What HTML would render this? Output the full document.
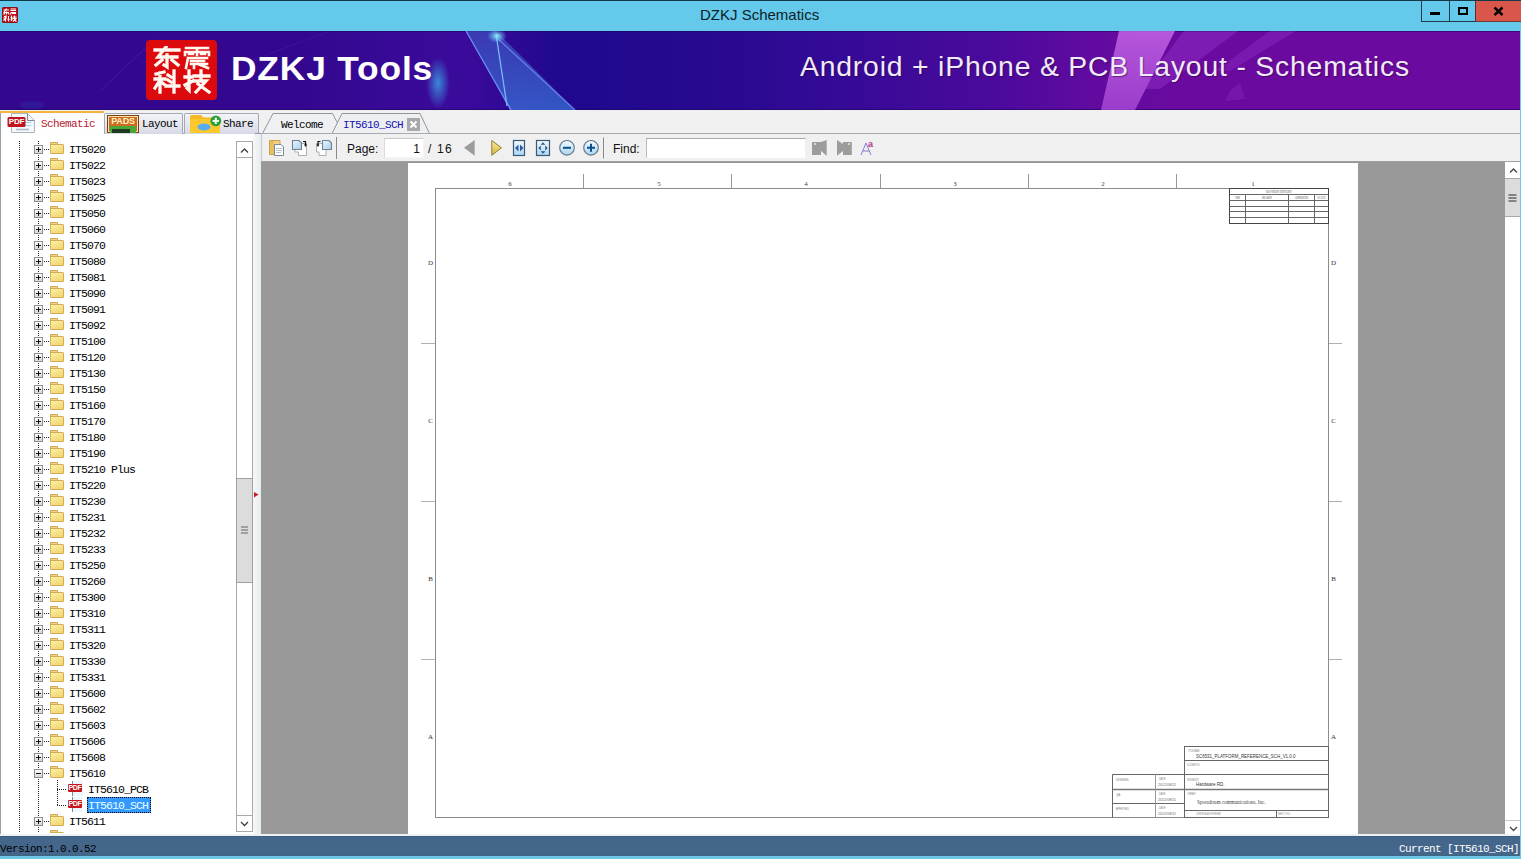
<!DOCTYPE html>
<html><head><meta charset="utf-8">
<style>
*{margin:0;padding:0;box-sizing:border-box}
html,body{width:1521px;height:859px;overflow:hidden;background:#f0f0f0;font-family:"Liberation Sans",sans-serif}
.a{position:absolute}
.mono{font-family:"Liberation Mono",monospace;font-size:12px;letter-spacing:-1.2px;white-space:pre}

.pb{width:9px;height:9px;border:1px solid #8f8f8f;background:linear-gradient(#fdfdfd,#d6d6d6)}
.pb:before{content:"";position:absolute;left:1px;top:3px;width:5px;height:1px;background:#111}
.pb i{position:absolute;left:3px;top:1px;width:1px;height:5px;background:#111}
.fd{width:14px;height:12px}
.fd:before{content:"";position:absolute;left:0;top:0;width:6px;height:3px;background:#efd57a;border:1px solid #d3ad55;border-bottom:none;border-radius:1px 1px 0 0}
.fd:after{content:"";position:absolute;left:0;top:2px;width:14px;height:10px;box-sizing:border-box;background:linear-gradient(160deg,#fbf0a8,#f3d56a);border:1px solid #d3ad55;border-radius:1px}
.tt{line-height:16px;height:16px;color:#000;font-size:11.5px;letter-spacing:-0.9px}
.sel{background:#3399ff;color:#eaffff;outline:1px dotted #000;outline-offset:-1px;height:16px;line-height:15px}
.tab2{height:21px;background:linear-gradient(#f3f4f8,#d6d9e6);border:1px solid #a4a9b5;border-bottom:none;border-radius:2px 2px 0 0}
.pi{width:16px;height:16px}
.pi:before{content:"";position:absolute;left:4px;top:0;width:10px;height:15px;background:#eef6fb;border-left:1px solid #7a8a99}
.pi b{position:absolute;left:0;top:3px;width:14px;height:8px;background:#c8141e;color:#fff;font:bold 7px/8px "Liberation Sans",sans-serif;text-align:center;border-radius:1px;letter-spacing:-0.3px}
</style></head><body>
<!-- TITLE BAR -->
<div class="a" style="left:0;top:0;width:1521px;height:31px;background:#64c9ea"></div>
<div class="a" style="left:0;top:0;width:1521px;height:1px;background:#12384a"></div>
<div class="a" id="title" style="left:700px;top:6px;font-size:15px;color:#0e1e28;white-space:pre;line-height:18px">DZKJ Schematics</div>
<!-- BANNER -->
<div class="a" id="banner" style="left:0;top:31px;width:1520px;height:79px;background:linear-gradient(90deg,#33088f 0%,#33088f 20%,#3a0a9a 29%,#3a0a9a 31%,#1f088e 37%,#26098e 46%,#340a96 55%,#4c0a9c 66%,#620aa0 72%,#6a0a9e 78%,#6a0a9e 100%)"></div>
<svg class="a" style="left:0;top:31px" width="1520" height="79">
 <path d="M0 0.5H1520M0 78.5H1520" stroke="#1c0660" stroke-width="1" opacity="0.6"/>
 <defs>
  <radialGradient id="glow1" cx="0.5" cy="0.5" r="0.5"><stop offset="0" stop-color="#3aa8e8" stop-opacity="0.8"/><stop offset="1" stop-color="#3aa8e8" stop-opacity="0"/></radialGradient>
  <radialGradient id="glow2" cx="0.5" cy="0.5" r="0.5"><stop offset="0" stop-color="#9ff" stop-opacity="0.9"/><stop offset="1" stop-color="#6cf" stop-opacity="0"/></radialGradient>
  <linearGradient id="strk" x1="0" y1="0" x2="0" y2="1"><stop offset="0" stop-color="#3d62c8" stop-opacity="0.55"/><stop offset="1" stop-color="#3a70d8" stop-opacity="0.75"/></linearGradient>
 </defs>
 <!-- faint diagonal streaks left -->
 <path d="M100 60L155 8" stroke="#6a50d0" stroke-width="1" opacity="0.25"/><ellipse cx="32" cy="74" rx="12" ry="4" fill="#3050c0" opacity="0.2"/>
 <path d="M250 30L330 0" stroke="#6a50d0" stroke-width="1" opacity="0.15"/>
 <!-- blue glow left of streak -->
 <ellipse cx="438" cy="52" rx="12" ry="26" fill="url(#glow1)"/>
 <!-- blue streak -->
 <polygon points="466,0 496,0 575,79 510,79" fill="url(#strk)"/>
 <line x1="466" y1="0" x2="511" y2="79" stroke="#6a8ff0" stroke-width="1.3"/>
 <line x1="496" y1="3" x2="507" y2="75" stroke="#7ab8f8" stroke-width="1.3"/>
 <line x1="496" y1="6" x2="575" y2="79" stroke="#6a7ee8" stroke-width="1.2"/>
 <ellipse cx="497" cy="5" rx="10" ry="7" fill="url(#glow2)"/>
 <!-- pink streaks right -->
 <defs><linearGradient id="pk" x1="0" y1="0" x2="0" y2="1"><stop offset="0" stop-color="#d070f0" stop-opacity="0.75"/><stop offset="1" stop-color="#c060e8" stop-opacity="0.6"/></linearGradient></defs><polygon points="1119,0 1175,0 1135,79 1101,79" fill="url(#pk)"/>
 <polygon points="1184,0 1238,0 1160,58 1140,58" fill="#a040d8" opacity="0.35"/>
 <polygon points="1270,0 1296,0 1230,40 1215,40" fill="#9a40d8" opacity="0.3"/>
 <polygon points="1230,60 1240,52 1245,68 1225,70" fill="#9a40d8" opacity="0.25"/>
</svg>
<!-- logo -->
<div class="a" style="left:146px;top:40px;width:71px;height:60px;background:#dc0a0c;border-radius:4px"></div>
<svg class="a" style="left:153px;top:46px" width="60" height="48" fill="none" stroke="#fff8f0" stroke-width="3.3" stroke-linecap="square">
 <g transform="translate(1,1)">
  <path d="M1 3H25M12 0L4 10H23M13 8V20L10 18M8 13L2 18M18 13L24 18"/>
 </g>
 <g transform="translate(31,1)" stroke-width="2.6">
  <path d="M2 1H24M1 5H25V8M1 5V8M13 1V8M5 7H9M17 7H21M4 11H23M4 11L2 21M7 14H20M7 17H23M10 17V21M14 17L24 21"/>
 </g>
 <g transform="translate(1,25)">
  <path d="M2 3L10 1M1 8H11M6 2V21M6 9L1 17M6 10L11 14M14 4L17 6M14 9L17 11M12 15H25M20 0V21"/>
 </g>
 <g transform="translate(31,25)">
  <path d="M1 6H8M5 0V19L3 17M1 14L9 10M10 5H25M17 0V9M11 10H22L12 21M14 13L25 21"/>
 </g>
</svg>
<div class="a" id="dzkj" style="left:231px;top:49px;font-size:33px;font-weight:700;color:#fff;white-space:pre;line-height:40px;letter-spacing:0.8px;transform:scaleX(1.07);transform-origin:0 0">DZKJ Tools</div>
<div class="a" id="android" style="left:800px;top:50px;font-size:27px;color:#f0eaf8;white-space:pre;line-height:34px;letter-spacing:0.77px;transform:scaleX(1.05);transform-origin:0 0;text-shadow:1px 1px 1px rgba(40,0,60,0.5)">Android + iPhone &amp; PCB Layout - Schematics</div>
<!-- right window border -->
<div class="a" style="left:1520px;top:31px;width:1px;height:828px;background:#64c9ea"></div>
<!-- TAB ROW -->
<div class="a" style="left:0;top:110px;width:1520px;height:24px;background:#f0f0f0"></div>

<!-- LEFT TABS -->
<div class="a" style="left:0;top:111px;width:104px;height:23px;background:linear-gradient(#fbfbfb,#fff);border-left:1px solid #9aa0a6"></div>
<div class="a" style="left:0;top:111px;width:104px;height:2px;background:#f4b23e"></div>
<div class="a" style="left:104px;top:133px;width:158px;height:1px;background:#a2aab0"></div>
<svg class="a" style="left:7px;top:112px" width="34" height="22">
 <path d="M4.5 1.5H20.5L27.5 8.5V20.5H4.5Z" fill="#f4f8fb" stroke="#aab6c0" stroke-width="1"/>
 <path d="M20.5 1.5V8.5H27.5" fill="none" stroke="#7d8a95" stroke-width="1"/>
 <path d="M9 17.5H22" stroke="#a8b8c8" stroke-width="1.5"/>
 <path d="M16 10.5H24M16 13.5H24" stroke="#9cd0ee" stroke-width="1.2"/>
 <rect x="0.5" y="5" width="18" height="10" rx="1.5" fill="#c0141e"/>
</svg>
<div class="a" style="left:8px;top:117px;width:17px;height:9px;font:bold 8px/9px 'Liberation Sans',sans-serif;color:#fff;text-align:center;letter-spacing:-0.2px">PDF</div>
<div class="a mono" style="left:41px;top:117px;line-height:14px;font-size:11px;letter-spacing:-0.6px;color:#b82030">Schematic</div>
<div class="a tab2" style="left:104px;top:113px;width:79px"></div>
<div class="a" style="left:107px;top:115px;width:32px;height:18px;background:#cf6a22;border:1px solid #7a4010;box-shadow:inset 0 0 0 1px #f6e6b0"></div>
<div class="a" style="left:109px;top:116px;width:28px;height:10px;font:bold 9px/10px 'Liberation Sans',sans-serif;color:#fff2c0;letter-spacing:-0.2px;text-align:center">PADS</div>
<div class="a" style="left:110px;top:126px;width:26px;height:7px;background:#4aa83a"></div>
<div class="a" style="left:112px;top:129px;width:18px;height:4px;background:#1e3a20"></div>
<div class="a mono" style="left:142px;top:117px;line-height:14px;font-size:11px;letter-spacing:-0.6px;color:#000">Layout</div>
<div class="a tab2" style="left:184px;top:113px;width:75px"></div>
<svg class="a" style="left:189px;top:113px" width="34" height="20">
 <path d="M1 3.5Q1 2 3 2H12L14.5 4.5H31V20H1Z" fill="#f5b820"/>
 <path d="M1 6H31V20H1Z" fill="#fcc830"/>
 <ellipse cx="15" cy="14" rx="6.5" ry="3.6" fill="#5aacf0"/>
 <circle cx="26.8" cy="7.9" r="5.4" fill="#2ea03a"/>
 <path d="M26.8 4.8V11M23.7 7.9H29.9" stroke="#f0fff0" stroke-width="2"/>
</svg>
<div class="a mono" style="left:223px;top:117px;line-height:14px;font-size:11px;letter-spacing:-0.6px;color:#000">Share</div>
<!-- DOC TABS -->
<svg class="a" style="left:255px;top:110px" width="200" height="25">
 <polygon points="7.5,23.5 18,3.5 77.5,3.5 88,23.5" fill="#eef0f3" stroke="#8f979d" stroke-width="1"/>
 <path d="M0 23.5H7.5" stroke="#8f979d"/>
 <polygon points="77,24 87,3.5 165,3.5 174.5,23.5 200,23.5 200,25 77,25" fill="#eeeff2"/>
 <path d="M77 23.5L87 3.5H165L174.5 23.5H200" fill="none" stroke="#8f979d" stroke-width="1"/>
</svg>
<div class="a mono" style="left:281px;top:118px;line-height:14px;font-size:11px;letter-spacing:-0.6px;color:#000">Welcome</div>
<div class="a mono" style="left:343px;top:118px;line-height:14px;font-size:11px;letter-spacing:-0.6px;color:#1010b0">IT5610_SCH</div>
<div class="a" style="left:407px;top:118px;width:13px;height:13px;background:#a8a8a8"></div>
<svg class="a" style="left:407px;top:118px" width="13" height="13"><path d="M3.5 3.5L9.5 9.5M9.5 3.5L3.5 9.5" stroke="#fff" stroke-width="2"/></svg>
<!-- LEFT PANEL -->
<div class="a" style="left:0;top:134px;width:253px;height:700px;background:#fff;border-left:1px solid #9aa0a6"></div>
<div class="a" id="tree" style="left:1px;top:133px;width:235px;height:700px;overflow:hidden">
<div class="a" style="left:18px;top:8px;width:1px;height:700px;background:repeating-linear-gradient(#222 0 1px,transparent 1px 2px)"></div>
<div class="a" style="left:37px;top:8px;width:1px;height:700px;background:repeating-linear-gradient(#222 0 1px,transparent 1px 2px)"></div>
<div class="a pb" style="left:33px;top:12px"><i></i></div>
<div class="a" style="left:43px;top:16px;width:6px;height:1px;background:repeating-linear-gradient(90deg,#222 0 1px,transparent 1px 2px)"></div>
<div class="a fd" style="left:49px;top:9px"></div>
<div class="a mono tt" style="left:68px;top:9px">IT5020</div>
<div class="a pb" style="left:33px;top:28px"><i></i></div>
<div class="a" style="left:43px;top:32px;width:6px;height:1px;background:repeating-linear-gradient(90deg,#222 0 1px,transparent 1px 2px)"></div>
<div class="a fd" style="left:49px;top:25px"></div>
<div class="a mono tt" style="left:68px;top:25px">IT5022</div>
<div class="a pb" style="left:33px;top:44px"><i></i></div>
<div class="a" style="left:43px;top:48px;width:6px;height:1px;background:repeating-linear-gradient(90deg,#222 0 1px,transparent 1px 2px)"></div>
<div class="a fd" style="left:49px;top:41px"></div>
<div class="a mono tt" style="left:68px;top:41px">IT5023</div>
<div class="a pb" style="left:33px;top:60px"><i></i></div>
<div class="a" style="left:43px;top:64px;width:6px;height:1px;background:repeating-linear-gradient(90deg,#222 0 1px,transparent 1px 2px)"></div>
<div class="a fd" style="left:49px;top:57px"></div>
<div class="a mono tt" style="left:68px;top:57px">IT5025</div>
<div class="a pb" style="left:33px;top:76px"><i></i></div>
<div class="a" style="left:43px;top:80px;width:6px;height:1px;background:repeating-linear-gradient(90deg,#222 0 1px,transparent 1px 2px)"></div>
<div class="a fd" style="left:49px;top:73px"></div>
<div class="a mono tt" style="left:68px;top:73px">IT5050</div>
<div class="a pb" style="left:33px;top:92px"><i></i></div>
<div class="a" style="left:43px;top:96px;width:6px;height:1px;background:repeating-linear-gradient(90deg,#222 0 1px,transparent 1px 2px)"></div>
<div class="a fd" style="left:49px;top:89px"></div>
<div class="a mono tt" style="left:68px;top:89px">IT5060</div>
<div class="a pb" style="left:33px;top:108px"><i></i></div>
<div class="a" style="left:43px;top:112px;width:6px;height:1px;background:repeating-linear-gradient(90deg,#222 0 1px,transparent 1px 2px)"></div>
<div class="a fd" style="left:49px;top:105px"></div>
<div class="a mono tt" style="left:68px;top:105px">IT5070</div>
<div class="a pb" style="left:33px;top:124px"><i></i></div>
<div class="a" style="left:43px;top:128px;width:6px;height:1px;background:repeating-linear-gradient(90deg,#222 0 1px,transparent 1px 2px)"></div>
<div class="a fd" style="left:49px;top:121px"></div>
<div class="a mono tt" style="left:68px;top:121px">IT5080</div>
<div class="a pb" style="left:33px;top:140px"><i></i></div>
<div class="a" style="left:43px;top:144px;width:6px;height:1px;background:repeating-linear-gradient(90deg,#222 0 1px,transparent 1px 2px)"></div>
<div class="a fd" style="left:49px;top:137px"></div>
<div class="a mono tt" style="left:68px;top:137px">IT5081</div>
<div class="a pb" style="left:33px;top:156px"><i></i></div>
<div class="a" style="left:43px;top:160px;width:6px;height:1px;background:repeating-linear-gradient(90deg,#222 0 1px,transparent 1px 2px)"></div>
<div class="a fd" style="left:49px;top:153px"></div>
<div class="a mono tt" style="left:68px;top:153px">IT5090</div>
<div class="a pb" style="left:33px;top:172px"><i></i></div>
<div class="a" style="left:43px;top:176px;width:6px;height:1px;background:repeating-linear-gradient(90deg,#222 0 1px,transparent 1px 2px)"></div>
<div class="a fd" style="left:49px;top:169px"></div>
<div class="a mono tt" style="left:68px;top:169px">IT5091</div>
<div class="a pb" style="left:33px;top:188px"><i></i></div>
<div class="a" style="left:43px;top:192px;width:6px;height:1px;background:repeating-linear-gradient(90deg,#222 0 1px,transparent 1px 2px)"></div>
<div class="a fd" style="left:49px;top:185px"></div>
<div class="a mono tt" style="left:68px;top:185px">IT5092</div>
<div class="a pb" style="left:33px;top:204px"><i></i></div>
<div class="a" style="left:43px;top:208px;width:6px;height:1px;background:repeating-linear-gradient(90deg,#222 0 1px,transparent 1px 2px)"></div>
<div class="a fd" style="left:49px;top:201px"></div>
<div class="a mono tt" style="left:68px;top:201px">IT5100</div>
<div class="a pb" style="left:33px;top:220px"><i></i></div>
<div class="a" style="left:43px;top:224px;width:6px;height:1px;background:repeating-linear-gradient(90deg,#222 0 1px,transparent 1px 2px)"></div>
<div class="a fd" style="left:49px;top:217px"></div>
<div class="a mono tt" style="left:68px;top:217px">IT5120</div>
<div class="a pb" style="left:33px;top:236px"><i></i></div>
<div class="a" style="left:43px;top:240px;width:6px;height:1px;background:repeating-linear-gradient(90deg,#222 0 1px,transparent 1px 2px)"></div>
<div class="a fd" style="left:49px;top:233px"></div>
<div class="a mono tt" style="left:68px;top:233px">IT5130</div>
<div class="a pb" style="left:33px;top:252px"><i></i></div>
<div class="a" style="left:43px;top:256px;width:6px;height:1px;background:repeating-linear-gradient(90deg,#222 0 1px,transparent 1px 2px)"></div>
<div class="a fd" style="left:49px;top:249px"></div>
<div class="a mono tt" style="left:68px;top:249px">IT5150</div>
<div class="a pb" style="left:33px;top:268px"><i></i></div>
<div class="a" style="left:43px;top:272px;width:6px;height:1px;background:repeating-linear-gradient(90deg,#222 0 1px,transparent 1px 2px)"></div>
<div class="a fd" style="left:49px;top:265px"></div>
<div class="a mono tt" style="left:68px;top:265px">IT5160</div>
<div class="a pb" style="left:33px;top:284px"><i></i></div>
<div class="a" style="left:43px;top:288px;width:6px;height:1px;background:repeating-linear-gradient(90deg,#222 0 1px,transparent 1px 2px)"></div>
<div class="a fd" style="left:49px;top:281px"></div>
<div class="a mono tt" style="left:68px;top:281px">IT5170</div>
<div class="a pb" style="left:33px;top:300px"><i></i></div>
<div class="a" style="left:43px;top:304px;width:6px;height:1px;background:repeating-linear-gradient(90deg,#222 0 1px,transparent 1px 2px)"></div>
<div class="a fd" style="left:49px;top:297px"></div>
<div class="a mono tt" style="left:68px;top:297px">IT5180</div>
<div class="a pb" style="left:33px;top:316px"><i></i></div>
<div class="a" style="left:43px;top:320px;width:6px;height:1px;background:repeating-linear-gradient(90deg,#222 0 1px,transparent 1px 2px)"></div>
<div class="a fd" style="left:49px;top:313px"></div>
<div class="a mono tt" style="left:68px;top:313px">IT5190</div>
<div class="a pb" style="left:33px;top:332px"><i></i></div>
<div class="a" style="left:43px;top:336px;width:6px;height:1px;background:repeating-linear-gradient(90deg,#222 0 1px,transparent 1px 2px)"></div>
<div class="a fd" style="left:49px;top:329px"></div>
<div class="a mono tt" style="left:68px;top:329px">IT5210 Plus</div>
<div class="a pb" style="left:33px;top:348px"><i></i></div>
<div class="a" style="left:43px;top:352px;width:6px;height:1px;background:repeating-linear-gradient(90deg,#222 0 1px,transparent 1px 2px)"></div>
<div class="a fd" style="left:49px;top:345px"></div>
<div class="a mono tt" style="left:68px;top:345px">IT5220</div>
<div class="a pb" style="left:33px;top:364px"><i></i></div>
<div class="a" style="left:43px;top:368px;width:6px;height:1px;background:repeating-linear-gradient(90deg,#222 0 1px,transparent 1px 2px)"></div>
<div class="a fd" style="left:49px;top:361px"></div>
<div class="a mono tt" style="left:68px;top:361px">IT5230</div>
<div class="a pb" style="left:33px;top:380px"><i></i></div>
<div class="a" style="left:43px;top:384px;width:6px;height:1px;background:repeating-linear-gradient(90deg,#222 0 1px,transparent 1px 2px)"></div>
<div class="a fd" style="left:49px;top:377px"></div>
<div class="a mono tt" style="left:68px;top:377px">IT5231</div>
<div class="a pb" style="left:33px;top:396px"><i></i></div>
<div class="a" style="left:43px;top:400px;width:6px;height:1px;background:repeating-linear-gradient(90deg,#222 0 1px,transparent 1px 2px)"></div>
<div class="a fd" style="left:49px;top:393px"></div>
<div class="a mono tt" style="left:68px;top:393px">IT5232</div>
<div class="a pb" style="left:33px;top:412px"><i></i></div>
<div class="a" style="left:43px;top:416px;width:6px;height:1px;background:repeating-linear-gradient(90deg,#222 0 1px,transparent 1px 2px)"></div>
<div class="a fd" style="left:49px;top:409px"></div>
<div class="a mono tt" style="left:68px;top:409px">IT5233</div>
<div class="a pb" style="left:33px;top:428px"><i></i></div>
<div class="a" style="left:43px;top:432px;width:6px;height:1px;background:repeating-linear-gradient(90deg,#222 0 1px,transparent 1px 2px)"></div>
<div class="a fd" style="left:49px;top:425px"></div>
<div class="a mono tt" style="left:68px;top:425px">IT5250</div>
<div class="a pb" style="left:33px;top:444px"><i></i></div>
<div class="a" style="left:43px;top:448px;width:6px;height:1px;background:repeating-linear-gradient(90deg,#222 0 1px,transparent 1px 2px)"></div>
<div class="a fd" style="left:49px;top:441px"></div>
<div class="a mono tt" style="left:68px;top:441px">IT5260</div>
<div class="a pb" style="left:33px;top:460px"><i></i></div>
<div class="a" style="left:43px;top:464px;width:6px;height:1px;background:repeating-linear-gradient(90deg,#222 0 1px,transparent 1px 2px)"></div>
<div class="a fd" style="left:49px;top:457px"></div>
<div class="a mono tt" style="left:68px;top:457px">IT5300</div>
<div class="a pb" style="left:33px;top:476px"><i></i></div>
<div class="a" style="left:43px;top:480px;width:6px;height:1px;background:repeating-linear-gradient(90deg,#222 0 1px,transparent 1px 2px)"></div>
<div class="a fd" style="left:49px;top:473px"></div>
<div class="a mono tt" style="left:68px;top:473px">IT5310</div>
<div class="a pb" style="left:33px;top:492px"><i></i></div>
<div class="a" style="left:43px;top:496px;width:6px;height:1px;background:repeating-linear-gradient(90deg,#222 0 1px,transparent 1px 2px)"></div>
<div class="a fd" style="left:49px;top:489px"></div>
<div class="a mono tt" style="left:68px;top:489px">IT5311</div>
<div class="a pb" style="left:33px;top:508px"><i></i></div>
<div class="a" style="left:43px;top:512px;width:6px;height:1px;background:repeating-linear-gradient(90deg,#222 0 1px,transparent 1px 2px)"></div>
<div class="a fd" style="left:49px;top:505px"></div>
<div class="a mono tt" style="left:68px;top:505px">IT5320</div>
<div class="a pb" style="left:33px;top:524px"><i></i></div>
<div class="a" style="left:43px;top:528px;width:6px;height:1px;background:repeating-linear-gradient(90deg,#222 0 1px,transparent 1px 2px)"></div>
<div class="a fd" style="left:49px;top:521px"></div>
<div class="a mono tt" style="left:68px;top:521px">IT5330</div>
<div class="a pb" style="left:33px;top:540px"><i></i></div>
<div class="a" style="left:43px;top:544px;width:6px;height:1px;background:repeating-linear-gradient(90deg,#222 0 1px,transparent 1px 2px)"></div>
<div class="a fd" style="left:49px;top:537px"></div>
<div class="a mono tt" style="left:68px;top:537px">IT5331</div>
<div class="a pb" style="left:33px;top:556px"><i></i></div>
<div class="a" style="left:43px;top:560px;width:6px;height:1px;background:repeating-linear-gradient(90deg,#222 0 1px,transparent 1px 2px)"></div>
<div class="a fd" style="left:49px;top:553px"></div>
<div class="a mono tt" style="left:68px;top:553px">IT5600</div>
<div class="a pb" style="left:33px;top:572px"><i></i></div>
<div class="a" style="left:43px;top:576px;width:6px;height:1px;background:repeating-linear-gradient(90deg,#222 0 1px,transparent 1px 2px)"></div>
<div class="a fd" style="left:49px;top:569px"></div>
<div class="a mono tt" style="left:68px;top:569px">IT5602</div>
<div class="a pb" style="left:33px;top:588px"><i></i></div>
<div class="a" style="left:43px;top:592px;width:6px;height:1px;background:repeating-linear-gradient(90deg,#222 0 1px,transparent 1px 2px)"></div>
<div class="a fd" style="left:49px;top:585px"></div>
<div class="a mono tt" style="left:68px;top:585px">IT5603</div>
<div class="a pb" style="left:33px;top:604px"><i></i></div>
<div class="a" style="left:43px;top:608px;width:6px;height:1px;background:repeating-linear-gradient(90deg,#222 0 1px,transparent 1px 2px)"></div>
<div class="a fd" style="left:49px;top:601px"></div>
<div class="a mono tt" style="left:68px;top:601px">IT5606</div>
<div class="a pb" style="left:33px;top:620px"><i></i></div>
<div class="a" style="left:43px;top:624px;width:6px;height:1px;background:repeating-linear-gradient(90deg,#222 0 1px,transparent 1px 2px)"></div>
<div class="a fd" style="left:49px;top:617px"></div>
<div class="a mono tt" style="left:68px;top:617px">IT5608</div>
<div class="a pb" style="left:33px;top:636px"></div>
<div class="a" style="left:43px;top:640px;width:6px;height:1px;background:repeating-linear-gradient(90deg,#222 0 1px,transparent 1px 2px)"></div>
<div class="a fd" style="left:49px;top:633px"></div>
<div class="a mono tt" style="left:68px;top:633px">IT5610</div>
<div class="a" style="left:56px;top:656px;width:10px;height:1px;background:repeating-linear-gradient(90deg,#222 0 1px,transparent 1px 2px)"></div>
<div class="a pi" style="left:67px;top:648px"><b>PDF</b></div>
<div class="a mono tt" style="left:87px;top:649px">IT5610_PCB</div>
<div class="a" style="left:56px;top:672px;width:10px;height:1px;background:repeating-linear-gradient(90deg,#222 0 1px,transparent 1px 2px)"></div>
<div class="a pi" style="left:67px;top:664px"><b>PDF</b></div>
<div class="a mono tt sel" style="left:86px;top:664px;padding:1px 3px 0 1px">IT5610_SCH</div>
<div class="a pb" style="left:33px;top:684px"><i></i></div>
<div class="a" style="left:43px;top:688px;width:6px;height:1px;background:repeating-linear-gradient(90deg,#222 0 1px,transparent 1px 2px)"></div>
<div class="a fd" style="left:49px;top:681px"></div>
<div class="a mono tt" style="left:68px;top:681px">IT5611</div>
<div class="a pb" style="left:33px;top:700px"><i></i></div>
<div class="a" style="left:43px;top:704px;width:6px;height:1px;background:repeating-linear-gradient(90deg,#222 0 1px,transparent 1px 2px)"></div>
<div class="a fd" style="left:49px;top:697px"></div>
<div class="a mono tt" style="left:68px;top:697px">IT5612</div>
<div class="a" style="left:56px;top:647px;width:1px;height:25px;background:repeating-linear-gradient(#222 0 1px,transparent 1px 2px)"></div>
</div>
<!-- splitter -->
<div class="a" style="left:253px;top:134px;width:8px;height:702px;background:linear-gradient(90deg,#f6f8f9,#e8ecef)"></div>

<!-- tree scrollbar -->
<div class="a" style="left:236px;top:141px;width:17px;height:691px;background:#fff;border:1px solid #a9a9a9"></div>
<div class="a" style="left:236px;top:157px;width:17px;height:1px;background:#a9a9a9"></div>
<div class="a" style="left:236px;top:815px;width:17px;height:1px;background:#a9a9a9"></div>
<div class="a" style="left:236px;top:478px;width:17px;height:105px;background:#dcdcdc;border:1px solid #a0a0a0"></div>
<svg class="a" style="left:236px;top:141px" width="17" height="691">
 <path d="M5 11.5L8.5 8L12 11.5" fill="none" stroke="#404040" stroke-width="1.3"/>
 <path d="M5 681L8.5 684.5L12 681" fill="none" stroke="#404040" stroke-width="1.3"/>
 <path d="M5 386H12M5 389H12M5 392H12" stroke="#666" stroke-width="1.2"/>
</svg>
<!-- splitter arrow -->
<svg class="a" style="left:253px;top:488px" width="8" height="12"><path d="M1 4L5.5 6.5L1 9.5Z" fill="#c81e2a"/></svg>
<!-- TOOLBAR -->
<div class="a" style="left:261px;top:133px;width:1259px;height:28px;background:#f0f0f0;border-top:1px solid #a8acb0;border-left:1px solid #c8ccd0"></div>
<div class="a" style="left:261px;top:161px;width:1259px;height:1px;background:#a0a0a0"></div>

<!-- TOOLBAR ICONS -->
<svg class="a" style="left:262px;top:134px" width="620" height="27">
 <!-- icon1 folder+doc -->
 <path d="M7.5 6.5H18V11H13V20.5H7.5Z" fill="#f0d488" stroke="#c8a050" stroke-width="1"/>
 <path d="M8 7H12V20H8Z" fill="#e8c060"/>
 <path d="M12.5 10.5H19L21.5 13V21.5H12.5Z" fill="#fff" stroke="#7a8898" stroke-width="1"/>
 <path d="M14 14.5H20M14 16.5H20M14 18.5H19" stroke="#a0b0c0" stroke-width="0.8"/>
 <!-- icon2 -->
 <path d="M33 9.5H44.5V21.5H36.5V18H33Z" fill="#fff" stroke="#a8b0b8" stroke-width="1"/>
 <path d="M30.5 6.5H37L39.5 9V15.5H30.5Z" fill="url(#lb2)" stroke="#6d8299" stroke-width="1.1"/>
 <path d="M41 7.5H43.5V11" fill="none" stroke="#111" stroke-width="1.2"/>
 <path d="M42 10.5L45 10.5L43.5 13Z" fill="#111"/>
 <!-- icon3 -->
 <path d="M54.5 9.5H64V21.5H57V18H54.5Z" fill="#fff" stroke="#a8b0b8" stroke-width="1"/>
 <path d="M60.5 6.5H67L69.5 9V15.5H60.5Z" fill="url(#lb2)" stroke="#6d8299" stroke-width="1.1"/>
 <path d="M58.5 7.5H56V11" fill="none" stroke="#111" stroke-width="1.2"/>
 <path d="M54.5 10.5L57.5 10.5L56 13Z" fill="#111"/>
 <!-- separator -->
 <path d="M74.5 3V25" stroke="#8a8a8a" stroke-width="1"/>
 <!-- prev -->
 <path d="M202 13.7L212.7 6V21.8Z" fill="#9c9c9c"/>
 <!-- next -->
 <defs><linearGradient id="yel" x1="0" y1="0" x2="0" y2="1"><stop offset="0" stop-color="#f8e9a0"/><stop offset="1" stop-color="#d8b838"/></linearGradient>
 <linearGradient id="lb2" x1="0" y1="0" x2="1" y2="1"><stop offset="0" stop-color="#eaf6ff"/><stop offset="1" stop-color="#a8cce8"/></linearGradient><linearGradient id="lb" x1="0" y1="0" x2="0" y2="1"><stop offset="0" stop-color="#f4faff"/><stop offset="1" stop-color="#a8d6f6"/></linearGradient></defs>
 <path d="M229.8 6.5L239.5 13.8L229.8 21.3Z" fill="url(#yel)" stroke="#8d7c3c" stroke-width="1"/>
 <!-- fit width -->
 <rect x="251.5" y="6.5" width="11" height="15" fill="url(#lb)" stroke="#3c5874" stroke-width="1.2"/>
 <path d="M253 14L256.5 10.5V17.5Z M261.5 14L258 10.5V17.5Z" fill="#2a5c9a"/>
 <!-- fit page -->
 <rect x="274.5" y="6.5" width="13" height="15" fill="url(#lb)" stroke="#3c5874" stroke-width="1.2"/>
 <path d="M281 8.3L283.5 10.8H278.5Z M281 19.7L283.5 17.2H278.5Z M276.3 14L278.8 11.5V16.5Z M285.7 14L283.2 11.5V16.5Z" fill="#3a5878"/>
 <!-- zoom out -->
 <circle cx="305" cy="13.8" r="7.3" fill="url(#lb)" stroke="#607488" stroke-width="1.1"/>
 <path d="M301 13.8H309" stroke="#0b4e8a" stroke-width="2"/>
 <!-- zoom in -->
 <circle cx="329" cy="13.8" r="7.3" fill="url(#lb)" stroke="#607488" stroke-width="1.1"/>
 <path d="M325 13.8H333M329 9.8V17.8" stroke="#0b4e8a" stroke-width="2"/>
 <!-- separator -->
 <path d="M341.5 3.5V24.5" stroke="#8a8a8a" stroke-width="1"/>
 <!-- find prev -->
 <path d="M550 8H559L564.7 6V21.7L559 17V21H550Z" fill="#9c9c9c"/>
 <circle cx="553" cy="10" r="0.9" fill="#eee"/>
 <!-- find next -->
 <path d="M575 6L581 10V8H589.8V21H581V17L575 21.7Z" fill="#9c9c9c"/>
 <circle cx="587" cy="10" r="0.9" fill="#eee"/>
 <!-- Aa -->
 <path d="M599 21L604 9L609 21M601 17H607" fill="none" stroke="#8a78d8" stroke-width="1"/>
 <text x="606" y="13" font-family="Liberation Sans" font-size="9" font-weight="bold" fill="#b8308a">a</text>
</svg>
<div class="a" style="left:347px;top:141px;font-size:12px;line-height:16px;color:#111;white-space:pre">Page:</div>
<div class="a" style="left:384px;top:138px;width:40px;height:20px;background:#fff;border:1px solid #f4f4f4;border-top-color:#c8c8c8;border-left-color:#dadada"></div>
<div class="a" style="left:384px;top:141px;width:36px;font-size:12px;line-height:16px;color:#111;text-align:right">1</div>
<div class="a" style="left:428px;top:141px;font-size:12px;line-height:16px;color:#111;white-space:pre;letter-spacing:1.2px">/ 16</div>
<div class="a" style="left:613px;top:141px;font-size:12px;line-height:16px;color:#111;white-space:pre">Find:</div>
<div class="a" style="left:646px;top:138px;width:160px;height:20px;background:#fff;border:1px solid #fff;border-top-color:#a8a8a8;border-left-color:#b8b8b8;border-right-color:#f0f0f0"></div>
<!-- VIEW -->
<div class="a" style="left:261px;top:162px;width:1244px;height:672px;background:#999"></div>
<div class="a" id="page" style="left:408px;top:162px;width:950px;height:672px;background:#fff;border-top:1px solid #949494"></div>
<svg class="a" style="left:408px;top:162px" width="950" height="672"><rect x="27.5" y="26.5" width="893" height="629" fill="none" stroke="#8c8c8c" stroke-width="1"/>
<path d="M175.5 12L175.5 26" stroke="#999" stroke-width="1"/>
<path d="M323.5 12L323.5 26" stroke="#999" stroke-width="1"/>
<path d="M472.5 12L472.5 26" stroke="#999" stroke-width="1"/>
<path d="M620.5 12L620.5 26" stroke="#999" stroke-width="1"/>
<path d="M768.5 12L768.5 26" stroke="#999" stroke-width="1"/>
<path d="M13 181.5L27 181.5" stroke="#b0b0b0" stroke-width="1"/>
<path d="M921 181.5L934 181.5" stroke="#b0b0b0" stroke-width="1"/>
<path d="M13 339.5L27 339.5" stroke="#b0b0b0" stroke-width="1"/>
<path d="M921 339.5L934 339.5" stroke="#b0b0b0" stroke-width="1"/>
<path d="M13 497.5L27 497.5" stroke="#b0b0b0" stroke-width="1"/>
<path d="M921 497.5L934 497.5" stroke="#b0b0b0" stroke-width="1"/>
<text x="102" y="24" font-family="Liberation Serif" font-size="7" fill="#444" text-anchor="middle">6</text>
<text x="251" y="24" font-family="Liberation Serif" font-size="7" fill="#444" text-anchor="middle">5</text>
<text x="398" y="24" font-family="Liberation Serif" font-size="7" fill="#444" text-anchor="middle">4</text>
<text x="547" y="24" font-family="Liberation Serif" font-size="7" fill="#444" text-anchor="middle">3</text>
<text x="695" y="24" font-family="Liberation Serif" font-size="7" fill="#444" text-anchor="middle">2</text>
<text x="845" y="24" font-family="Liberation Serif" font-size="7" fill="#444" text-anchor="middle">1</text>
<text x="22.5" y="103" font-family="Liberation Serif" font-size="7" fill="#333" text-anchor="middle">D</text>
<text x="925.5" y="103" font-family="Liberation Serif" font-size="7" fill="#333" text-anchor="middle">D</text>
<text x="22.5" y="261" font-family="Liberation Serif" font-size="7" fill="#333" text-anchor="middle">C</text>
<text x="925.5" y="261" font-family="Liberation Serif" font-size="7" fill="#333" text-anchor="middle">C</text>
<text x="22.5" y="419" font-family="Liberation Serif" font-size="7" fill="#333" text-anchor="middle">B</text>
<text x="925.5" y="419" font-family="Liberation Serif" font-size="7" fill="#333" text-anchor="middle">B</text>
<text x="22.5" y="577" font-family="Liberation Serif" font-size="7" fill="#333" text-anchor="middle">A</text>
<text x="925.5" y="577" font-family="Liberation Serif" font-size="7" fill="#333" text-anchor="middle">A</text>
<rect x="821.5" y="26.5" width="99" height="35" fill="none" stroke="#444" stroke-width="1"/>
<path d="M821.5 32.5L920.5 32.5" stroke="#666" stroke-width="1"/>
<path d="M821.5 38.5L920.5 38.5" stroke="#666" stroke-width="1"/>
<path d="M821.5 44.5L920.5 44.5" stroke="#666" stroke-width="1"/>
<path d="M821.5 49.5L920.5 49.5" stroke="#666" stroke-width="1"/>
<path d="M821.5 55.5L920.5 55.5" stroke="#666" stroke-width="1"/>
<path d="M837.5 32.5L837.5 61.5" stroke="#666" stroke-width="1"/>
<path d="M880.5 32.5L880.5 61.5" stroke="#666" stroke-width="1"/>
<path d="M906.5 32.5L906.5 61.5" stroke="#666" stroke-width="1"/>
<text x="871" y="31" font-family="Liberation Serif" font-size="3" fill="#666" text-anchor="middle" textLength="26">REVISION HISTORY</text>
<text x="829.5" y="37" font-family="Liberation Serif" font-size="3" fill="#666" text-anchor="middle" textLength="5">VER</text>
<text x="859" y="37" font-family="Liberation Serif" font-size="3" fill="#666" text-anchor="middle" textLength="10">REASON</text>
<text x="893.5" y="37" font-family="Liberation Serif" font-size="3" fill="#666" text-anchor="middle" textLength="14">APPROVED</text>
<text x="913.5" y="37" font-family="Liberation Serif" font-size="3" fill="#666" text-anchor="middle" textLength="8">DATE</text>
<rect x="776.5" y="584.5" width="144" height="71" fill="none" stroke="#666" stroke-width="1"/>
<path d="M776.5 598.5L920.5 598.5" stroke="#666" stroke-width="1"/>
<path d="M704.5 612.5L920.5 612.5" stroke="#666" stroke-width="1"/>
<path d="M704.5 627.5L920.5 627.5" stroke="#777" stroke-width="1.4"/>
<path d="M704.5 641.5L776.5 641.5" stroke="#666" stroke-width="1"/>
<path d="M776.5 648.5L920.5 648.5" stroke="#666" stroke-width="1"/>
<path d="M868.5 648.5L868.5 655.5" stroke="#666" stroke-width="1"/>
<path d="M704.5 612.5L704.5 655.5" stroke="#666" stroke-width="1"/>
<path d="M747.5 612.5L747.5 655.5" stroke="#999" stroke-width="1"/>
<text x="780" y="589.5" font-family="Liberation Sans" font-size="2.6" fill="#777" textLength="12" lengthAdjust="spacingAndGlyphs">TITLE NAME:</text>
<text x="788" y="596" font-family="Liberation Sans" font-size="6" fill="#333" textLength="99.5" lengthAdjust="spacingAndGlyphs">SC6531_PLATFORM_REFERENCE_SCH_V1.0.0</text>
<text x="779" y="604" font-family="Liberation Sans" font-size="2.6" fill="#777" textLength="13" lengthAdjust="spacingAndGlyphs">DOCUMENT NO.</text>
<text x="779" y="618.5" font-family="Liberation Sans" font-size="2.6" fill="#777" textLength="12" lengthAdjust="spacingAndGlyphs">DESIGNED BY:</text>
<text x="788" y="624.3" font-family="Liberation Sans" font-size="6" fill="#333" textLength="28.5" lengthAdjust="spacingAndGlyphs">Hardware RD.</text>
<text x="779" y="633" font-family="Liberation Sans" font-size="2.6" fill="#777" textLength="9" lengthAdjust="spacingAndGlyphs">COMPANY:</text>
<text x="789" y="642" font-family="Liberation Serif" font-size="6" fill="#444" textLength="68.5" lengthAdjust="spacingAndGlyphs">Spreadtrum communications, Inc.</text>
<text x="788" y="653" font-family="Liberation Sans" font-size="2.6" fill="#777" textLength="25" lengthAdjust="spacingAndGlyphs">CONFIDENTIAL AND PROPRIETARY</text>
<text x="870" y="653" font-family="Liberation Sans" font-size="2.6" fill="#777" textLength="12" lengthAdjust="spacingAndGlyphs">SHEET 1 OF 16</text>
<text x="708" y="618.5" font-family="Liberation Sans" font-size="2.6" fill="#777" textLength="12.8" lengthAdjust="spacingAndGlyphs">DESIGNED</text>
<text x="751" y="617.5" font-family="Liberation Sans" font-size="2.6" fill="#777" textLength="7" lengthAdjust="spacingAndGlyphs">DATE:</text>
<text x="750" y="624.0" font-family="Liberation Sans" font-size="3.2" fill="#666" textLength="18" lengthAdjust="spacingAndGlyphs">2012/08/11</text>
<text x="708" y="633.5" font-family="Liberation Sans" font-size="2.6" fill="#777" textLength="4.800000000000001" lengthAdjust="spacingAndGlyphs">QA:</text>
<text x="751" y="632.5" font-family="Liberation Sans" font-size="2.6" fill="#777" textLength="7" lengthAdjust="spacingAndGlyphs">DATE:</text>
<text x="750" y="639.0" font-family="Liberation Sans" font-size="3.2" fill="#666" textLength="18" lengthAdjust="spacingAndGlyphs">2012/08/11</text>
<text x="708" y="647.5" font-family="Liberation Sans" font-size="2.6" fill="#777" textLength="12.8" lengthAdjust="spacingAndGlyphs">APPROVED</text>
<text x="751" y="646.5" font-family="Liberation Sans" font-size="2.6" fill="#777" textLength="7" lengthAdjust="spacingAndGlyphs">DATE:</text>
<text x="750" y="653.0" font-family="Liberation Sans" font-size="3.2" fill="#666" textLength="18" lengthAdjust="spacingAndGlyphs">2012/08/11</text></svg>
<!-- right scrollbar -->

<!-- light line -->
<div class="a" style="left:0;top:834px;width:1520px;height:2px;background:#eaf2f6"></div>
<!-- STATUS BAR -->
<div class="a" style="left:0;top:836px;width:1520px;height:20px;background:#45668b;border-top:1px solid #3c6078;border-bottom:1px solid #3e6680"></div>
<div class="a" style="left:0;top:856px;width:1521px;height:3px;background:#6cc6e6"></div>
<div class="a" style="left:1505px;top:162px;width:15px;height:672px;background:#fff"></div>
<div class="a" style="left:1505px;top:178px;width:15px;height:39px;background:#dcdcdc;border-top:1px solid #a8a8a8;border-bottom:1px solid #a8a8a8"></div>
<div class="a" style="left:1505px;top:820px;width:15px;height:1px;background:#c8c8c8"></div>
<svg class="a" style="left:1505px;top:162px" width="15" height="672">
 <path d="M5 10.5L8.5 7L12 10.5" fill="none" stroke="#444" stroke-width="1.3"/>
 <path d="M5 665L8.5 668.5L12 665" fill="none" stroke="#444" stroke-width="1.3"/>
 <path d="M3.5 33H11.5M3.5 36H11.5M3.5 39H11.5" stroke="#666" stroke-width="1.3"/>
</svg>
<!-- title bar icon & buttons -->
<div class="a" style="left:2px;top:7px;width:16px;height:16px;background:#bc0e16;border-radius:2px;box-shadow:inset 0 0 0 1px #901018"></div>
<svg class="a" style="left:3px;top:8px" width="14" height="14" fill="none" stroke="#fff" stroke-width="1.1">
 <path d="M0.5 2H6M3.5 0.5L1 4.5H6M3.5 3.5V6.5M2 5L0.5 6.5M5 5L6.3 6.5"/>
 <path d="M7.5 1H13M7.5 2.5H13M8 4.5H13M8 4.5L7.5 6.5M9 5.5H13"/>
 <path d="M1 8.5L4 8M0.5 10H4M2.5 8V13.5M2.5 10.5L0.5 12.5M5 9L6 9.5M4.5 11.5H6.5M5.5 8V13.5"/>
 <path d="M7.5 9.5H9.5M8.5 7.5V13M7.5 12L10 10.5M10 9H13.5M11.5 7.5V10M10 10.5H13L10 13.5M11 11.5L13.5 13.5"/>
</svg>
<div class="a" style="left:1421px;top:1px;width:1px;height:21px;background:#1a3a48"></div>
<div class="a" style="left:1449px;top:1px;width:1px;height:21px;background:#1a3a48"></div>
<div class="a" style="left:1421px;top:21px;width:55px;height:1px;background:#1a3a48"></div>
<div class="a" style="left:1475px;top:1px;width:46px;height:21px;background:#d9574a;border-left:1px solid #553030;border-bottom:1px solid #6a3a30"></div>
<div class="a" style="left:1430px;top:12px;width:10px;height:3px;background:#000"></div>
<div class="a" style="left:1458px;top:7px;width:10px;height:8px;border:2px solid #000"></div>
<svg class="a" style="left:1492px;top:5px" width="14" height="12"><path d="M2.5 2.5L10.5 10M10.5 2.5L2.5 10" stroke="#000" stroke-width="2.4"/></svg>
<!-- status text -->
<div class="a mono" style="left:0;top:841px;font-size:11px;letter-spacing:-0.6px;line-height:16px;color:#000">Version:1.0.0.52</div>
<div class="a mono" style="left:1399px;top:841px;font-size:11px;letter-spacing:-0.6px;line-height:16px;color:#fff">Current [IT5610_SCH]</div>
</body></html>
